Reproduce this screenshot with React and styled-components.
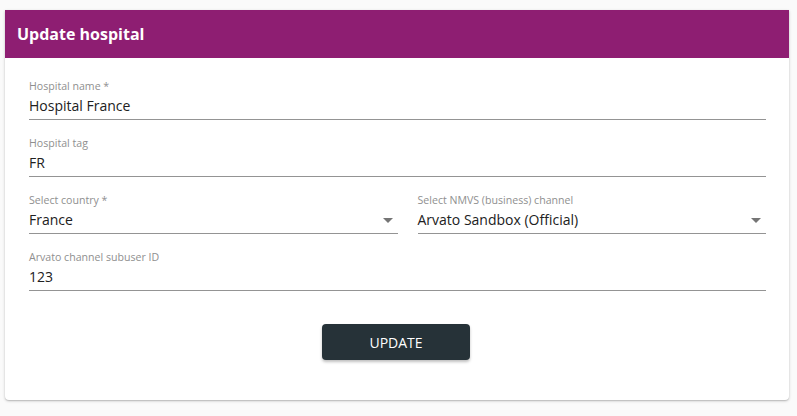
import styled, { createGlobalStyle } from "styled-components";

const GlobalStyle = createGlobalStyle`
  html, body {
    margin: 0;
    padding: 0;
    background: #fafafa;
    font-family: "Open Sans", "Liberation Sans", sans-serif;
  }
`;

const Page = styled.div`
  padding: 10px 8px 16px 5px;
`;

const Card = styled.div`
  background: #fff;
  border-radius: 0 0 4px 4px;
  box-shadow: 0 1px 3px rgba(0, 0, 0, 0.22), 0 1px 1px rgba(0, 0, 0, 0.1);
`;

const Header = styled.div`
  height: 48px;
  background: #8e1e72;
  display: flex;
  align-items: center;
  padding: 0 12px;
`;

const Title = styled.h2`
  margin: 0;
  color: #fff;
  font-size: 16px;
  font-weight: 700;
`;

const Body = styled.div`
  padding: 22px 23px 40px 24px;
`;

const Row = styled.div`
  display: grid;
  grid-template-columns: 1fr 1fr;
`;

const Field = styled.div`
  margin-bottom: 17px;
  padding-left: ${(p) => (p.$inset ? "20px" : "0")};
`;

const Label = styled.div`
  font-size: 10.6px;
  font-weight: 400;
  line-height: 13px;
  color: #8f8f8f;
`;

const Value = styled.div`
  position: relative;
  font-size: 14px;
  line-height: 20px;
  color: #212121;
  padding: 3px 0;
  border-bottom: 1px solid #949494;
`;

const Arrow = styled.span`
  position: absolute;
  right: 5px;
  top: 11px;
  width: 0;
  height: 0;
  border-left: 5px solid transparent;
  border-right: 5px solid transparent;
  border-top: 5px solid #757575;
`;

const Actions = styled.div`
  display: flex;
  justify-content: center;
  padding-top: 16px;
`;

const Button = styled.button`
  width: 148px;
  height: 36px;
  margin-left: -3px;
  background: #263238;
  color: #fff;
  border: none;
  border-radius: 4px;
  font-family: inherit;
  font-size: 14px;
  font-weight: 500;
  box-shadow: 0 2px 3px rgba(0, 0, 0, 0.25);
`;

const TextField = ({ label, value, select, inset }) => (
  <Field $inset={inset}>
    <Label>{label}</Label>
    <Value>
      {value}
      {select && <Arrow />}
    </Value>
  </Field>
);

export default function App() {
  return (
    <Page>
      <GlobalStyle />
      <Card>
        <Header>
          <Title>Update hospital</Title>
        </Header>
        <Body>
          <TextField label="Hospital name *" value="Hospital France" />
          <TextField label="Hospital tag" value="FR" />
          <Row>
            <TextField label="Select country *" value="France" select />
            <TextField
              label="Select NMVS (business) channel"
              value="Arvato Sandbox (Official)"
              select
              inset
            />
          </Row>
          <TextField label="Arvato channel subuser ID" value="123" />
          <Actions>
            <Button>UPDATE</Button>
          </Actions>
        </Body>
      </Card>
    </Page>
  );
}
